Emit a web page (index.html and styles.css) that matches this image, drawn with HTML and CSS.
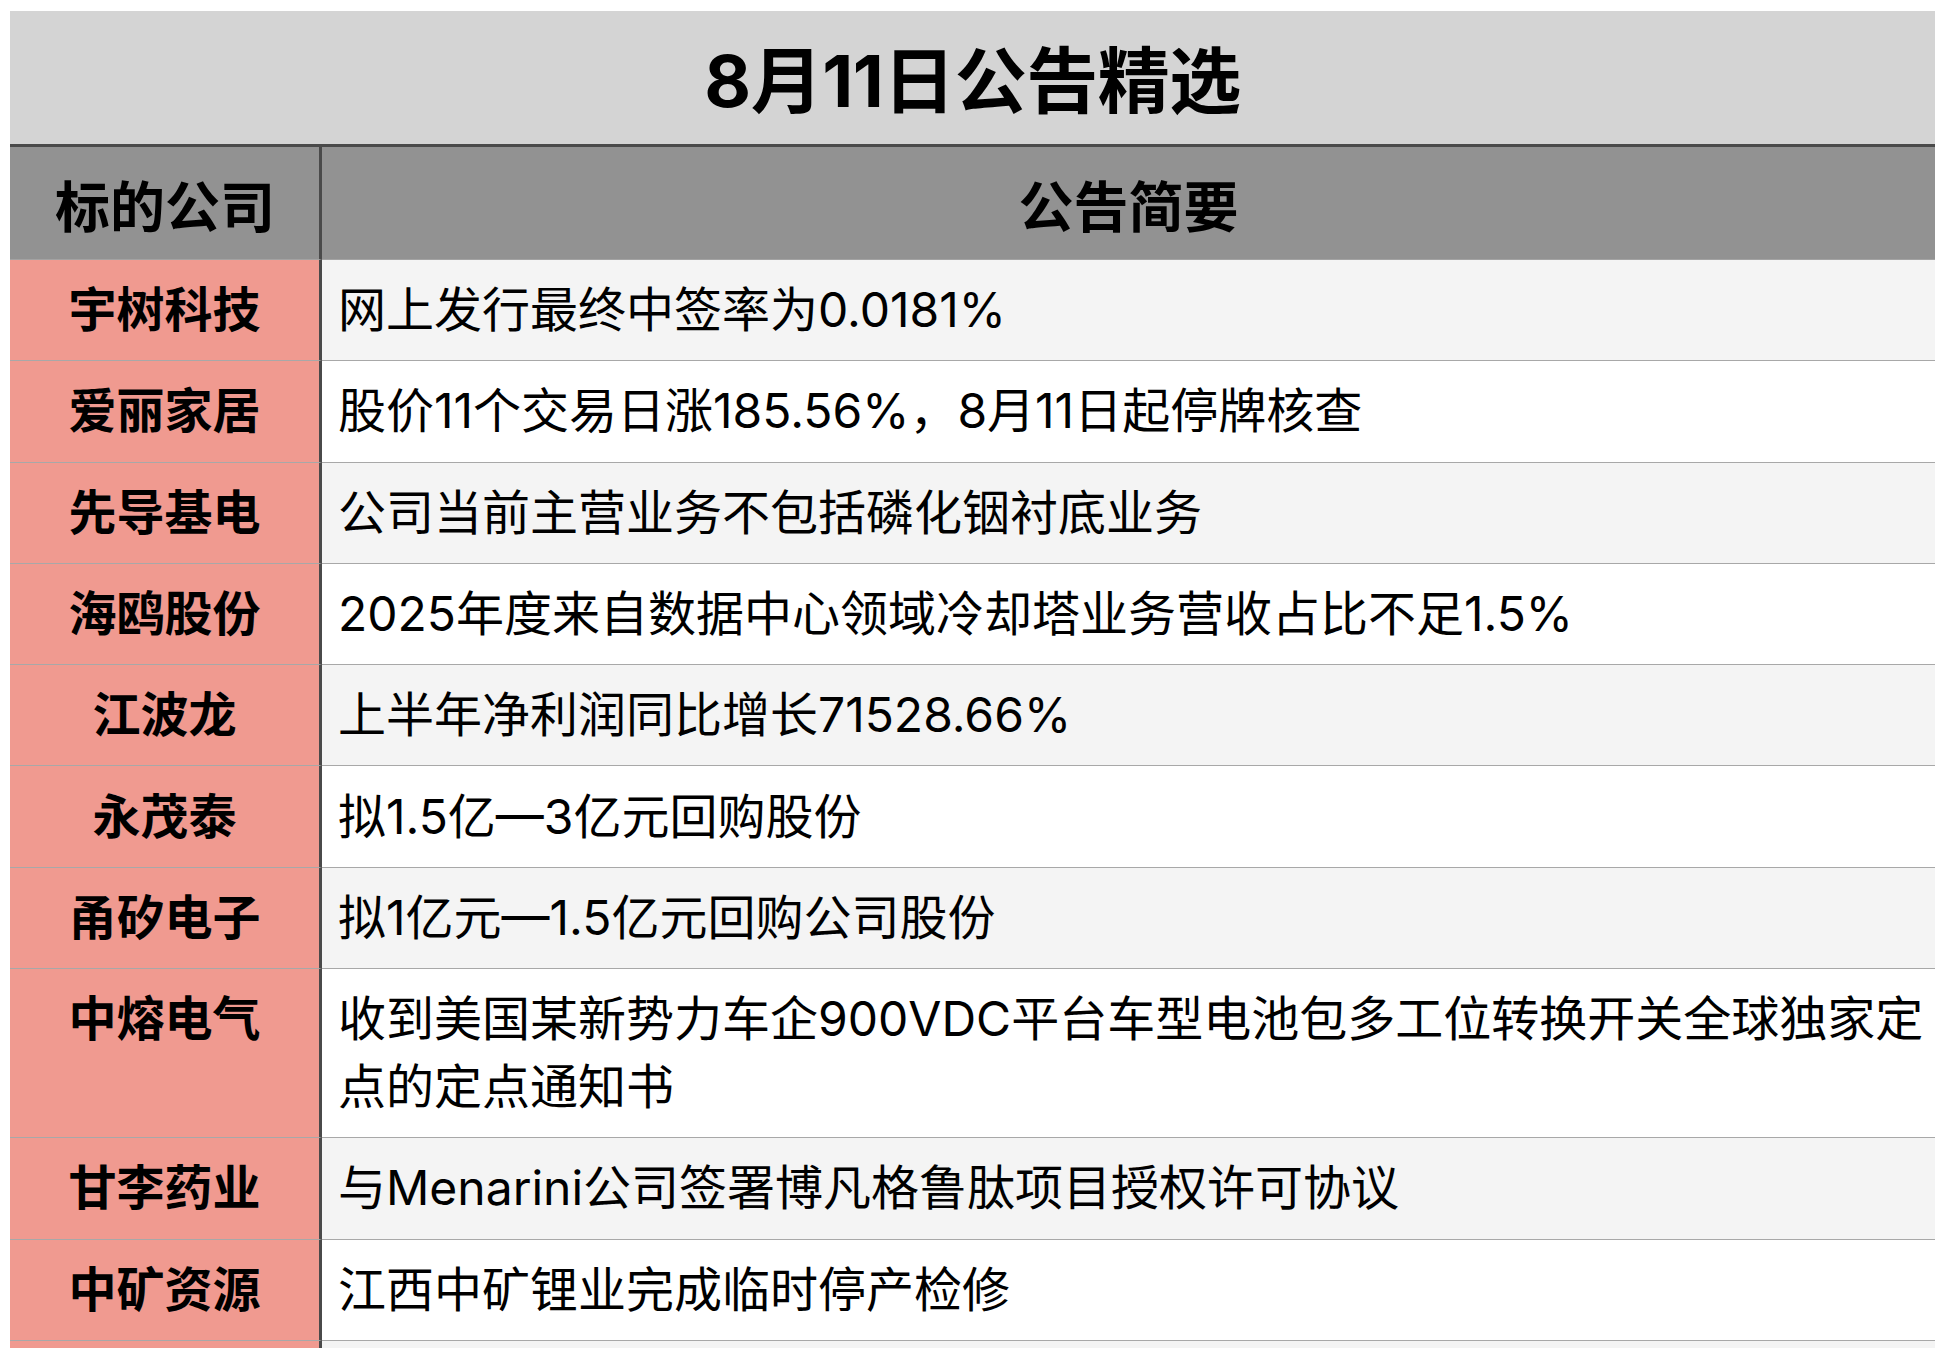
FILE: index.html
```html
<!DOCTYPE html>
<html lang="zh-CN">
<head>
<meta charset="utf-8">
<title>8月11日公告精选</title>
<link rel="stylesheet" href="styles.css">
</head>
<body>
<div class="sheet">
  <div class="title">8月11日公告精选</div>
  <div class="grid">
    <div class="head head-left">标的公司</div>
    <div class="head head-right">公告简要</div>

    <div class="co">宇树科技</div>
    <div class="note odd">网上发行最终中签率为0.0181%</div>

    <div class="co">爱丽家居</div>
    <div class="note">股价11个交易日涨185.56%，8月11日起停牌核查</div>

    <div class="co">先导基电</div>
    <div class="note odd">公司当前主营业务不包括磷化铟衬底业务</div>

    <div class="co">海鸥股份</div>
    <div class="note">2025年度来自数据中心领域冷却塔业务营收占比不足1.5%</div>

    <div class="co">江波龙</div>
    <div class="note odd">上半年净利润同比增长71528.66%</div>

    <div class="co">永茂泰</div>
    <div class="note">拟1.5亿—3亿元回购股份</div>

    <div class="co">甬矽电子</div>
    <div class="note odd">拟1亿元—1.5亿元回购公司股份</div>

    <div class="co">中熔电气</div>
    <div class="note">收到美国某新势力车企900VDC平台车型电池包多工位转换开关全球独家定点的定点通知书</div>

    <div class="co">甘李药业</div>
    <div class="note odd">与Menarini公司签署博凡格鲁肽项目授权许可协议</div>

    <div class="co">中矿资源</div>
    <div class="note">江西中矿锂业完成临时停产检修</div>

    <div class="co">&nbsp;</div>
    <div class="note odd">&nbsp;</div>
  </div>
</div>
</body>
</html>
```

FILE: styles.css
```css
html, body {
  margin: 0;
  padding: 0;
  background: #ffffff;
}

body {
  font-family: "Inter", "Noto Sans CJK SC", sans-serif;
  color: #000000;
  overflow: hidden;
}

.sheet {
  width: 1925px;
  margin: 11px 0 0 10px;
}

.title {
  height: 132px;
  background: #d4d4d4;
  border-bottom: 3px solid #4a4a4a;
  display: flex;
  align-items: center;
  justify-content: center;
  padding-bottom: 4px;
  box-sizing: border-box;
  height: 136px;
  font-size: 72px;
  font-weight: 700;
  letter-spacing: -0.5px;
}

.grid {
  display: grid;
  grid-template-columns: 312px 1fr;
}

.head {
  height: 112px;
  background: #929292;
  border-bottom: 1px solid #a3a3a3;
  display: flex;
  align-items: center;
  justify-content: center;
  font-size: 55px;
  font-weight: 700;
}

.head-left {
  border-right: 3px solid #4a4a4a;
  padding-left: 1px;
}

.co {
  background: #f09a90;
  border-right: 3px solid #4a4a4a;
  border-bottom: 1px solid #a8a8a8;
  padding: 16.15px 0;
  line-height: 68px;
  font-size: 48px;
  font-weight: 700;
  text-align: center;
}

.note {
  background: #ffffff;
  border-bottom: 1px solid #a8a8a8;
  padding: 16.15px 4px 16.15px 16px;
  line-height: 68px;
  font-size: 48px;
  font-weight: 400;
}

.note.odd {
  background: #f4f4f4;
}
```
